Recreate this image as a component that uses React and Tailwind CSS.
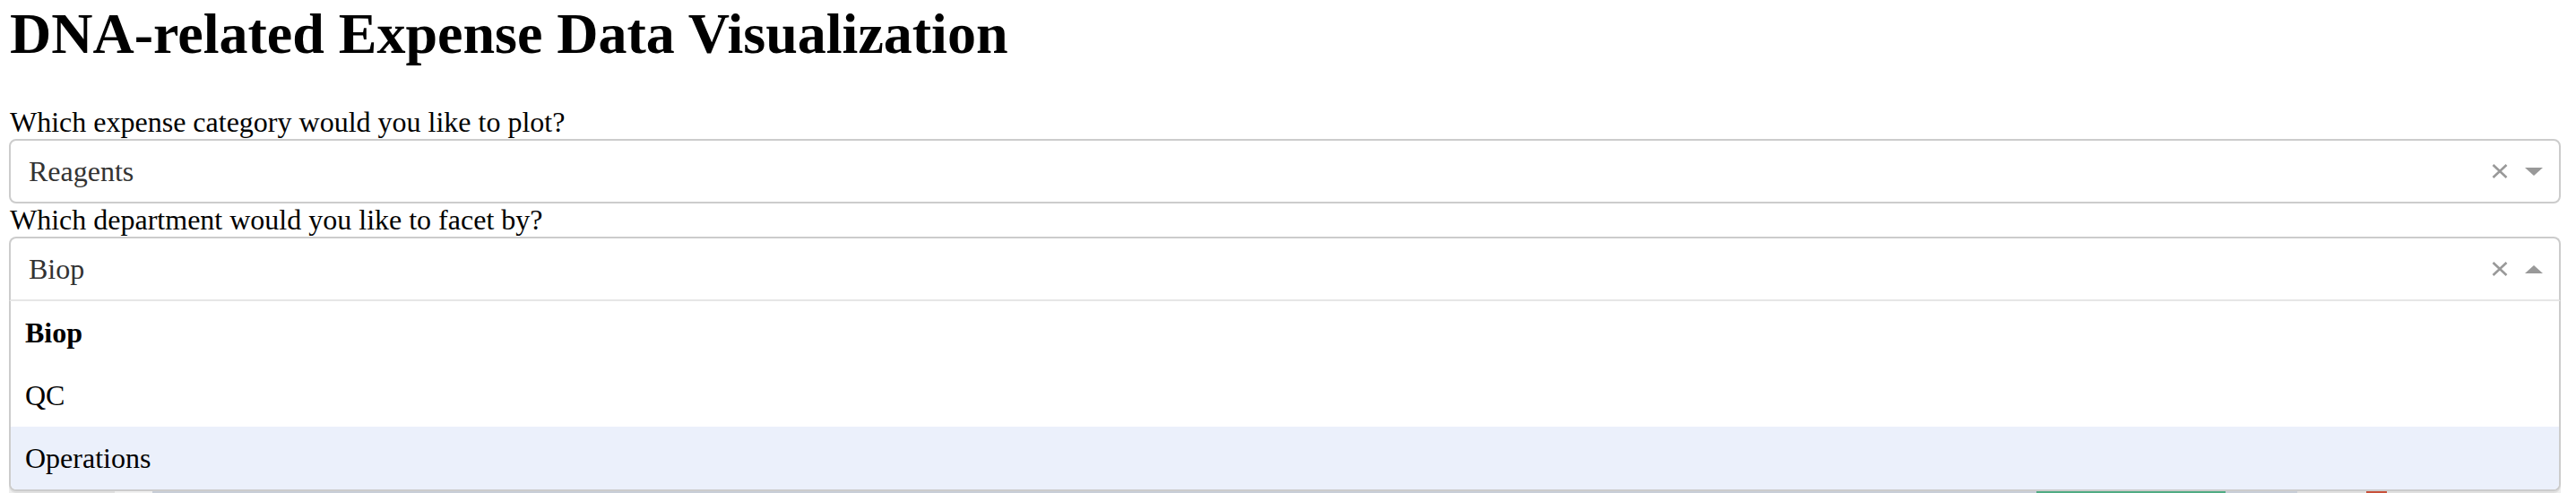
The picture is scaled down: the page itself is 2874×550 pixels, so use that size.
import React from "react";

function ClearIcon() {
  return (
    <svg width="18" height="16" viewBox="0 0 18 16" className="shrink-0">
      <path d="M1.5 1 L16.5 15 M16.5 1 L1.5 15" stroke="#999" strokeWidth="2.6" fill="none" />
    </svg>
  );
}

function Arrow({ up }) {
  return (
    <svg width="20" height="9" viewBox="0 0 20 9" className="shrink-0">
      {up ? <polygon points="0,9 20,9 10,0" fill="#999" /> : <polygon points="0,0 20,0 10,9" fill="#999" />}
    </svg>
  );
}

function Control({ value, open }) {
  return (
    <div
      className={
        open
          ? "flex h-[72px] items-center border-2 border-[#ccc] border-b-[#e6e6e6] rounded-t-[8px] bg-white"
          : "flex h-[72px] items-center border-2 border-[#ccc] rounded-[8px] bg-white"
      }
    >
      <div className="flex-1 pl-[20px] text-[32px] text-[#333] leading-[36px]">{value}</div>
      <div className="flex items-center gap-[19px] pr-[18px]">
        <ClearIcon />
        <Arrow up={open} />
      </div>
    </div>
  );
}

const options = ["Biop", "QC", "Operations"];

export default function App() {
  return (
    <div className="bg-white min-h-[550px] pl-[10px] pr-[17px] font-['Liberation_Serif',serif] text-black">
      <h1 className="pt-[2px] mb-[45px] text-[64px] font-bold leading-[71px] pl-[1px]">
        DNA-related Expense Data Visualization
      </h1>

      <label className="block pl-[1px] text-[32px] leading-[37px]">Which expense category would you like to plot?</label>
      <Control value="Reagents" />

      <label className="block pl-[1px] text-[32px] leading-[37px]">Which department would you like to facet by?</label>
      <div className="relative">
        <Control value="Biop" open />
        <div className="absolute left-0 right-0 top-full z-10 border-2 border-t-0 border-[#ccc] rounded-b-[8px] bg-white shadow-[0_2px_0_rgba(0,0,0,0.06)] overflow-hidden">
          {options.map((o, i) => (
            <div
              key={o}
              className={
                "flex h-[70px] items-center pl-[16px] text-[32px] leading-[37px] " +
                (i === 0 ? "font-bold " : "") +
                (i === 2 ? "bg-[#ebf0fb]" : "bg-white")
              }
            >
              {o}
            </div>
          ))}
        </div>
      </div>

      {/* graph peeking out beneath the open menu */}
      <div className="mt-[160px] flex h-[80px]">
        <div className="w-[118px] bg-[#eeeeee]" />
        <div className="w-[42px] bg-white pt-[51px] pl-[4px] font-['Liberation_Sans',sans-serif] text-[24px] leading-[24px] text-[#2a3f5f]">
          15k
        </div>
        <div className="w-[2102px] bg-[#d5dbe6]" />
        <div className="w-[211px] bg-[#55b78d]" />
        <div className="w-[80px] bg-[#d5dbe6]" />
        <div className="w-[77px] bg-[#eeeeee]" />
        <div className="w-[23px] bg-[#d5573e]" />
        <div className="flex-1 bg-[#eeeeee]" />
      </div>
    </div>
  );
}
